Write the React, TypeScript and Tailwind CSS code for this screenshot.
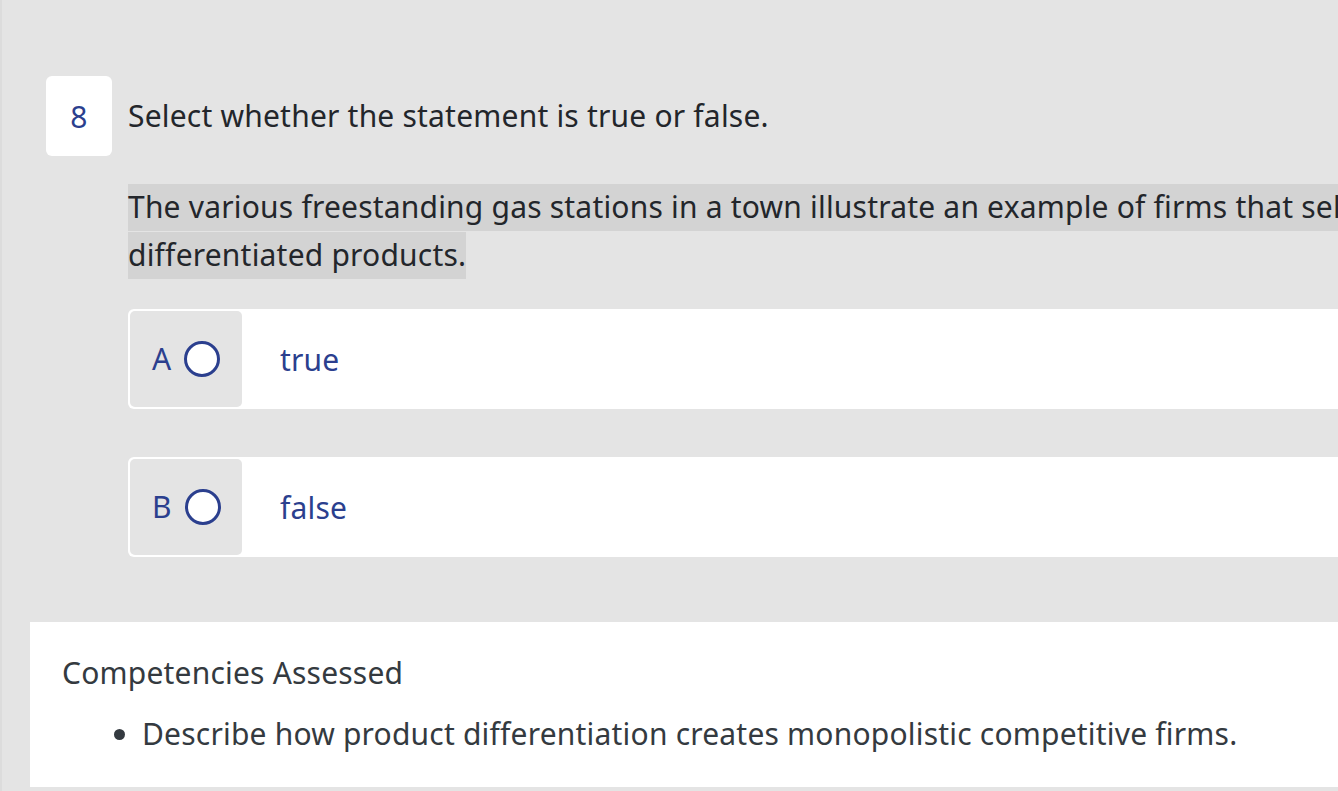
const font = { fontFamily: '"Noto Sans", "Open Sans", sans-serif' };

function Option({ letter, label }: { letter: string; label: string }) {
  return (
    <div className="flex h-[100px] rounded-[6px] bg-white p-[2px]">
      <div className="flex w-[112px] shrink-0 items-center gap-[13px] rounded-[5px] bg-[#e4e4e4] pl-[22px]">
        <span className="text-[30px] leading-none text-[#2b3f8e]">{letter}</span>
        <span className="block h-[36px] w-[36px] rounded-full border-[3px] border-[#2b3f8e] bg-white" />
      </div>
      <div className="flex items-center pl-[38px] text-[30px] text-[#2b3f8e]">{label}</div>
    </div>
  );
}

export default function App() {
  return (
    <div
      className="h-[791px] w-[1338px] overflow-hidden border-l-2 border-[#dcdcdc] bg-[#e4e4e4] tracking-[0.2px]"
      style={font}
    >
      {/* Question */}
      <div className="flex gap-[16px] pl-[44px] pt-[76px]">
        <div className="flex h-[80px] w-[66px] shrink-0 items-center justify-center rounded-[6px] bg-white text-[30px] text-[#2b3f8e]">
          8
        </div>
        <div className="w-[1300px] shrink-0 pt-[18px]">
          <p className="text-[30px] leading-[44px] text-[#23262b]">
            Select whether the statement is true or false.
          </p>
          <p className="mt-[45px] text-[30px] leading-[48px] text-[#23262b]">
            <span className="bg-[#d3d3d3] pb-[4px] pt-[2px]">
              The various freestanding gas stations in a town illustrate an example of firms that sell
              differentiated products.
            </span>
          </p>
          <div className="mt-[30px] flex flex-col gap-[48px]">
            <Option letter="A" label="true" />
            <Option letter="B" label="false" />
          </div>
        </div>
      </div>

      {/* Competencies */}
      <div className="ml-[28px] mt-[65px] h-[165px] bg-white pl-[32px] pt-[31px] text-[#343a40]">
        <h3 className="text-[30px] leading-[40px]">Competencies Assessed</h3>
        <ul className="mt-[21px] list-disc pl-[80px] text-[30px] leading-[40px]">
          <li>Describe how product differentiation creates monopolistic competitive firms.</li>
        </ul>
      </div>
    </div>
  );
}
